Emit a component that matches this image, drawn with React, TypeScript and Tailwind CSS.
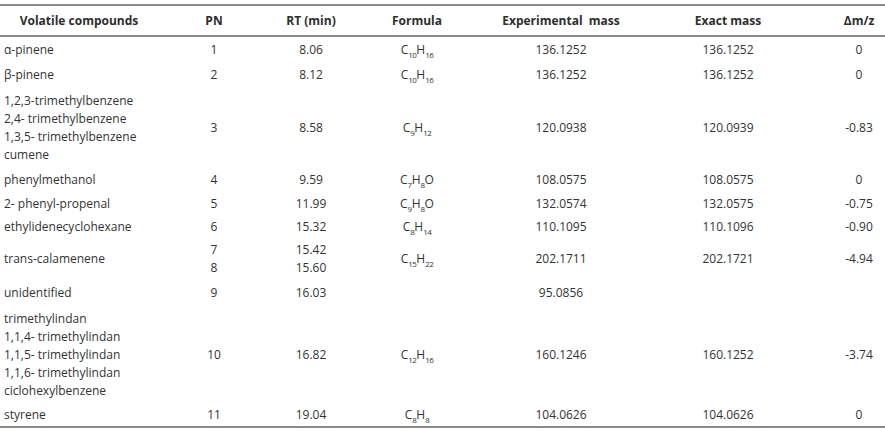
import React from "react";

type Row = {
  names: string[];
  pn: string[];
  rt: string[];
  formula?: [string, string][];
  exp: string;
  exact?: string;
  delta?: string;
  h: string;
};

// formula parts: [element, subscript]
const rows: Row[] = [
  { names: ["α-pinene"], pn: ["1"], rt: ["8.06"], formula: [["C", "10"], ["H", "16"]], exp: "136.1252", exact: "136.1252", delta: "0", h: "h-[25px]" },
  { names: ["β-pinene"], pn: ["2"], rt: ["8.12"], formula: [["C", "10"], ["H", "16"]], exp: "136.1252", exact: "136.1252", delta: "0", h: "h-[26px]" },
  {
    names: ["1,2,3-trimethylbenzene", "2,4- trimethylbenzene", "1,3,5- trimethylbenzene", "cumene"],
    pn: ["3"],
    rt: ["8.58"],
    formula: [["C", "9"], ["H", "12"]],
    exp: "120.0938",
    exact: "120.0939",
    delta: "-0.83",
    h: "h-[79px]",
  },
  { names: ["phenylmethanol"], pn: ["4"], rt: ["9.59"], formula: [["C", "7"], ["H", "8"], ["O", ""]], exp: "108.0575", exact: "108.0575", delta: "0", h: "h-[25px]" },
  { names: ["2- phenyl-propenal"], pn: ["5"], rt: ["11.99"], formula: [["C", "9"], ["H", "8"], ["O", ""]], exp: "132.0574", exact: "132.0575", delta: "-0.75", h: "h-[23px]" },
  { names: ["ethylidenecyclohexane"], pn: ["6"], rt: ["15.32"], formula: [["C", "8"], ["H", "14"]], exp: "110.1095", exact: "110.1096", delta: "-0.90", h: "h-[23px]" },
  { names: ["trans-calamenene"], pn: ["7", "8"], rt: ["15.42", "15.60"], formula: [["C", "15"], ["H", "22"]], exp: "202.1711", exact: "202.1721", delta: "-4.94", h: "h-[42px]" },
  { names: ["unidentified"], pn: ["9"], rt: ["16.03"], exp: "95.0856", h: "h-[26px]" },
  {
    names: ["trimethylindan", "1,1,4- trimethylindan", "1,1,5- trimethylindan", "1,1,6- trimethylindan", "ciclohexylbenzene"],
    pn: ["10"],
    rt: ["16.82"],
    formula: [["C", "12"], ["H", "16"]],
    exp: "160.1246",
    exact: "160.1252",
    delta: "-3.74",
    h: "h-[97px]",
  },
  { names: ["styrene"], pn: ["11"], rt: ["19.04"], formula: [["C", "8"], ["H", "8"]], exp: "104.0626", exact: "104.0626", delta: "0", h: "h-[23px]" },
];

function Formula({ parts }: { parts: [string, string][] }) {
  return (
    <span>
      {parts.map(([el, sub], i) => (
        <React.Fragment key={i}>
          {el}
          {sub && <sub className="-bottom-1 text-[8px] tracking-[-0.5px]">{sub}</sub>}
        </React.Fragment>
      ))}
    </span>
  );
}

function Lines({ items }: { items: string[] }) {
  return (
    <div className="flex flex-col">
      {items.map((t, i) => (
        <span key={i}>{t}</span>
      ))}
    </div>
  );
}

const grid = "grid grid-cols-[166px_96px_98px_114px_174px_185px_52px] items-center";

export default function App() {
  return (
    <div className="w-[885px] bg-white pt-[4px] font-['Open_Sans',sans-serif] text-[12px] leading-[18px] text-[#333]">
      <div className="border-y-2 border-[#8a8a8a]">
        <div className={`${grid} h-[31px] border-b-2 border-[#8a8a8a] font-bold text-[#2e2e2e]`}>
          <div className="pr-[8px] text-center">Volatile compounds</div>
          <div className="text-center">PN</div>
          <div className="text-center">RT (min)</div>
          <div className="text-center">Formula</div>
          <div className="text-center">Experimental&nbsp; mass</div>
          <div className="pr-[25px] text-center">Exact mass</div>
          <div className="text-center">Δm/z</div>
        </div>
        {rows.map((r, i) => (
          <div key={i} className={`${grid} ${r.h}`}>
            <div className="pl-[4px]">
              <Lines items={r.names} />
            </div>
            <div className="text-center">
              <Lines items={r.pn} />
            </div>
            <div className="text-center">
              <Lines items={r.rt} />
            </div>
            <div className="text-center">{r.formula && <Formula parts={r.formula} />}</div>
            <div className="text-center">{r.exp}</div>
            <div className="pr-[25px] text-center">{r.exact}</div>
            <div className="text-center">{r.delta}</div>
          </div>
        ))}
      </div>
    </div>
  );
}
